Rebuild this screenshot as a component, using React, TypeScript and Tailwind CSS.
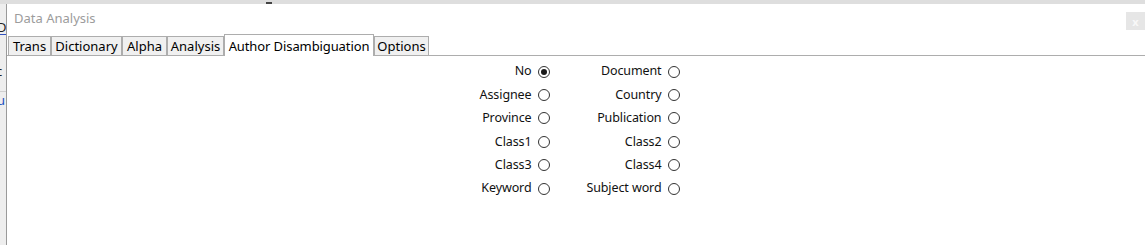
import React from "react";

const font = { fontFamily: '"Noto Sans", "Open Sans", "Noto Sans CJK SC", sans-serif' };

const tabs = [
  { label: "Trans", w: "w-[43px]" },
  { label: "Dictionary", w: "w-[71px]" },
  { label: "Alpha", w: "w-[45px]" },
  { label: "Analysis", w: "w-[57px]" },
  { label: "Author Disambiguation", w: "w-[150px]", active: true },
  { label: "Options", w: "w-[55px]" },
];

const left = ["No", "Assignee", "Province", "Class1", "Class3", "Keyword"];
const right = ["Document", "Country", "Publication", "Class2", "Class4", "Subject word"];

function Radio({ checked }: { checked?: boolean }) {
  return (
    <span className="w-[12px] h-[12px] rounded-full border border-[#333333] bg-white flex items-center justify-center shrink-0">
      {checked && <span className="w-[6px] h-[6px] rounded-full bg-[#1a1a1a]" />}
    </span>
  );
}

function Row({ label, checked }: { label: string; checked?: boolean }) {
  return (
    <div className="h-[23.4px] flex items-center justify-end gap-[6px] whitespace-nowrap">
      <span className="text-[12.5px] leading-none text-[#111] tracking-[-0.1px]">{label}</span>
      <Radio checked={checked} />
    </div>
  );
}

export default function App() {
  return (
    <div className="w-[1145px] h-[245px] overflow-hidden bg-[#f0f0f0] flex flex-col" style={font}>
      <div className="h-[4px] bg-[#dedede] shrink-0 flex items-end">
        <div className="ml-[266px] w-[6px] h-[2px] bg-[#444]" />
      </div>
      <div className="flex flex-1 min-h-0">
        <div className="w-[6px] shrink-0 bg-[#eeeeee] overflow-hidden text-[13px]">
          <div className="h-[30px] flex items-end text-[#222] leading-none -ml-[3px]">D</div>
          <div className="h-[1px] bg-[#3050c0]" />
          <div className="h-[30px]" />
          <div className="h-[14px] text-[#222] leading-none -ml-[4px]">c</div>
          <div className="h-[12px]" />
          <div className="h-[1px] bg-[#d0d0d0]" />
          <div className="h-[14px] text-[#2050c0] leading-none -ml-[3px] mt-[2px]">u</div>
        </div>
        <div className="flex-1 bg-white border-l border-[#9a9a9a] flex flex-col">
          <div className="h-[31px] flex items-start justify-between shrink-0">
            <span className="pl-[7px] pt-[8px] text-[13px] leading-none text-[#9c9c9c]">Data Analysis</span>
            <div className="mt-[8px] w-[19px] h-[18px] bg-[#e6e6e6] flex items-center justify-center text-[11px] leading-none text-[#f8f8f8] font-bold">
              x
            </div>
          </div>
          <div className="flex items-end h-[21px] border-b border-[#adadad] pl-[1px] shrink-0">
            {tabs.map((t) =>
              t.active ? (
                <div
                  key={t.label}
                  className={`${t.w} h-[22px] -mb-px bg-white border border-b-0 border-[#adadad] flex items-center justify-center text-[13px] leading-none text-black tracking-[-0.1px] whitespace-nowrap pt-[1px]`}
                >
                  {t.label}
                </div>
              ) : (
                <div
                  key={t.label}
                  className={`${t.w} h-[19px] bg-[#f0f0f0] border border-b-0 border-[#adadad] flex items-center justify-center text-[13px] leading-none text-black whitespace-nowrap pt-[1px]`}
                >
                  {t.label}
                </div>
              )
            )}
          </div>
          <div className="flex justify-center pl-[8px] pt-[4px]">
            <div className="w-[69px] flex flex-col items-end">
              {left.map((l, i) => (
                <Row key={l} label={l} checked={i === 0} />
              ))}
            </div>
            <div className="w-[37px]" />
            <div className="w-[93px] flex flex-col items-end">
              {right.map((l) => (
                <Row key={l} label={l} />
              ))}
            </div>
          </div>
        </div>
      </div>
    </div>
  );
}
